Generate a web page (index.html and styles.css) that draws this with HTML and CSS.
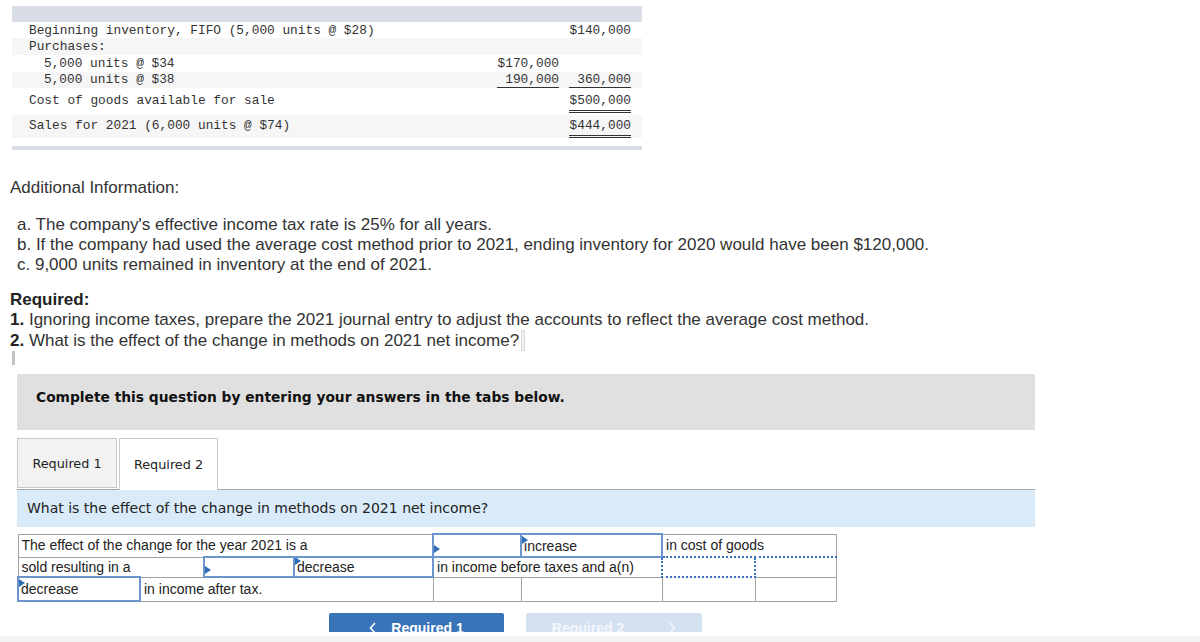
FILE: index.html
```html
<!DOCTYPE html>
<html>
<head>
<meta charset="utf-8">
<link rel="stylesheet" href="styles.css">
</head>
<body>
<div class="viewport">
  <div class="content">
    <div class="inv">
      <div class="inv-bar"></div>
      <div class="inv-row r1"><span class="lbl">Beginning inventory, FIFO (5,000 units @ $28)</span><span class="c1"></span><span class="c2">$140,000</span></div>
      <div class="inv-row r2 alt"><span class="lbl">Purchases:</span><span class="c1"></span><span class="c2"></span></div>
      <div class="inv-row r3"><span class="lbl sub">5,000 units @ $34</span><span class="c1">$170,000</span><span class="c2"></span></div>
      <div class="inv-row r4 alt"><span class="lbl sub">5,000 units @ $38</span><span class="c1 ul">190,000</span><span class="c2 ul">360,000</span></div>
      <div class="inv-row r5"><span class="lbl">Cost of goods available for sale</span><span class="c1"></span><span class="c2 dbl">$500,000</span></div>
      <div class="inv-row r6 alt"><span class="lbl">Sales for 2021 (6,000 units @ $74)</span><span class="c1"></span><span class="c2 dbl">$444,000</span></div>
      <div class="inv-gap"></div>
      <div class="inv-bar thin"></div>
    </div>

    <div class="info">
      <p class="head">Additional Information:</p>
      <p class="ind first">a. The company's effective income tax rate is 25% for all years.</p>
      <p class="ind">b. If the company had used the average cost method prior to 2021, ending inventory for 2020 would have been $120,000.</p>
      <p class="ind">c. 9,000 units remained in inventory at the end of 2021.</p>
      <p class="req"><b>Required:</b></p>
      <p><b>1.</b> Ignoring income taxes, prepare the 2021 journal entry to adjust the accounts to reflect the average cost method.</p>
      <p><b>2.</b> What is the effect of the change in methods on 2021 net income?<span class="caret"></span></p>
      <div class="mark"></div>
    </div>

    <div class="prompt">Complete this question by entering your answers in the tabs below.</div>

    <div class="tabs">
      <div class="tab">Required 1</div>
      <div class="tab active">Required 2</div>
    </div>
    <div class="qbar">What is the effect of the change in methods on 2021 net income?</div>

    <table class="ans">
      <colgroup>
        <col class="ca"><col class="cb"><col class="cc"><col class="cd"><col class="ce"><col class="cf"><col class="cg"><col class="ch">
      </colgroup>
      <tr class="row1">
        <td colspan="4">The effect of the change for the year 2021 is a</td>
        <td class="inp"><div class="box"></div></td>
        <td class="inp"><div class="box">increase</div></td>
        <td colspan="2" class="focus-top">in cost of goods</td>
      </tr>
      <tr class="row2">
        <td colspan="2">sold resulting in a</td>
        <td class="inp"><div class="box"></div></td>
        <td class="inp"><div class="box">decrease</div></td>
        <td colspan="2">in income before taxes and a(n)</td>
        <td class="focus"></td>
        <td></td>
      </tr>
      <tr class="row3">
        <td class="inp"><div class="box">decrease</div></td>
        <td colspan="3">in income after tax.</td>
        <td></td>
        <td></td>
        <td></td>
        <td></td>
      </tr>
    </table>

    <div class="nav">
      <div class="btn prev"><svg class="chev" width="8" height="12" viewBox="0 0 8 12"><polyline points="6,1 1.5,6 6,11" fill="none" stroke="currentColor" stroke-width="1.6"/></svg><span>Required 1</span></div>
      <div class="btn next"><span>Required 2</span><svg class="chev" width="8" height="12" viewBox="0 0 8 12"><polyline points="2,1 6.5,6 2,11" fill="none" stroke="currentColor" stroke-width="1.6"/></svg></div>
    </div>
  </div>
</div>
<div class="footer"></div>
</body>
</html>
```

FILE: styles.css
```css
html, body {
  margin: 0;
  padding: 0;
  background: #ffffff;
}
body {
  font-family: "Liberation Sans", Arial, sans-serif;
  color: #2e2e2e;
  overflow: hidden;
}
.viewport {
  height: 632px;
  overflow: hidden;
}
.content {
  padding-top: 6px;
}

/* inventory table */
.inv {
  margin-left: 12px;
  width: 630px;
  font-family: "Liberation Mono", "DejaVu Sans Mono", monospace;
  font-size: 12.8px;
  color: #333;
}
.inv-bar {
  height: 16px;
  background: #d9dde6;
}
.inv-bar.thin {
  height: 4px;
}
.inv-gap {
  height: 8px;
}
.inv-row {
  display: flex;
  align-items: flex-start;
  line-height: 15px;
  white-space: pre;
}
.inv-row.alt {
  background: #f6f6f6;
}
.inv-row .lbl {
  flex: 1;
  padding-left: 17px;
}
.inv-row .lbl.sub {
  padding-left: 32px;
}
.inv-row .c1,
.inv-row .c2 {
  width: 62px;
  text-align: right;
  flex: none;
}
.inv-row .c1 {
  margin-right: 10px;
}
.inv-row .c2 {
  margin-right: 11px;
}
.r1 { height: 16px; padding-top: 1px; box-sizing: border-box; }
.r2 { height: 17px; padding-top: 1px; box-sizing: border-box; }
.r3 { height: 17px; padding-top: 1px; box-sizing: border-box; }
.r4 { height: 16px; box-sizing: border-box; }
.r4 .ul { border-bottom: 1px solid #333; }
.r5 { height: 27px; padding-top: 5px; box-sizing: border-box; }
.r6 { height: 23px; padding-top: 3px; box-sizing: border-box; }
.dbl {
  padding-bottom: 2px;
  border-bottom: 3px double #333;
}

/* info text */
.info {
  margin-top: 28px;
  font-size: 17px;
  line-height: 20px;
  color: #333;
}
.info p {
  margin: 0;
  padding-left: 10px;
}
.info p.ind {
  padding-left: 17px;
}
.info p.first {
  margin-top: 17px;
}
.info p.req {
  margin-top: 15px;
}
.info b {
  font-weight: bold;
  color: #222;
}
.caret {
  display: inline-block;
  width: 2px;
  height: 19px;
  margin-left: 2px;
  vertical-align: -5px;
  border: 1px solid #d6d6d6;
  background: #f2f2f2;
}
.mark {
  margin-top: 0;
  margin-left: 12px;
  width: 3px;
  height: 14px;
  background: #c2c2c2;
}

/* prompt box */
.prompt {
  margin-top: 9px;
  margin-left: 17px;
  width: 1018px;
  height: 56px;
  box-sizing: border-box;
  padding: 14px 0 0 19px;
  background: #e0e0e0;
  font-family: "DejaVu Sans", Verdana, sans-serif;
  font-weight: bold;
  font-size: 13.8px;
  line-height: 18px;
  color: #111;
}

/* tabs */
.tabs {
  margin-top: 8px;
  margin-left: 17px;
  display: flex;
  gap: 2px;
  height: 51px;
  position: relative;
  z-index: 1;
}
.tab {
  width: 100px;
  height: 50px;
  box-sizing: border-box;
  border: 1px solid #c9c9c9;
  background: #f2f2f2;
  font-family: "DejaVu Sans", Verdana, sans-serif;
  font-size: 12.8px;
  color: #222;
  display: flex;
  align-items: center;
  justify-content: center;
}
.tab.active {
  width: 99px;
  height: 52px;
  background: #ffffff;
  border-bottom: none;
}

.qbar {
  margin-left: 17px;
  width: 1018px;
  height: 38px;
  box-sizing: border-box;
  border-top: 1px solid #a6a6a6;
  background: #d9eaf8;
  padding: 9px 0 0 10px;
  font-family: "DejaVu Sans", Verdana, sans-serif;
  font-size: 14px;
  line-height: 18px;
  color: #222;
}

/* answer table */
.ans {
  margin-top: 6px;
  margin-left: 17px;
  border-collapse: collapse;
  table-layout: fixed;
  width: 818px;
  font-family: "Liberation Sans", Arial, sans-serif;
  font-size: 14px;
  color: #222;
}
.ans col.ca { width: 122px; }
.ans col.cb { width: 64px; }
.ans col.cc { width: 90px; }
.ans col.cd { width: 139px; }
.ans col.ce { width: 88px; }
.ans col.cf { width: 141px; }
.ans col.cg { width: 93px; }
.ans col.ch { width: 81px; }
.ans td {
  border: 1px solid #a3a3a3;
  padding: 0 3px;
  white-space: nowrap;
  overflow: hidden;
  line-height: 16px;
}
.ans tr.row1 td { height: 21px; }
.ans tr.row2 td { height: 18px; }
.ans tr.row3 td { height: 22px; }
.ans td.inp {
  padding: 0;
  border: 2px solid #6b95cc;
}
.ans td.inp .box {
  position: relative;
  padding: 0 2px;
  line-height: 18px;
}
.ans td.inp .box::before {
  content: "";
  position: absolute;
  left: 0;
  top: -1px;
  border-left: 6px solid #2f6db5;
  border-top: 4px solid transparent;
  border-bottom: 4px solid transparent;
}
.ans td.focus-top {
  border-bottom: 2px dotted #3a72c0;
}
.ans td.focus {
  border: 2px dotted #3a72c0;
}

/* nav buttons */
.nav {
  margin-top: 11px;
  margin-left: 329px;
  display: flex;
  gap: 22px;
}
.btn {
  width: 175px;
  height: 30px;
  box-sizing: border-box;
  border-radius: 2px;
  display: flex;
  align-items: center;
  justify-content: center;
  gap: 14px;
  font-family: "Liberation Sans", Arial, sans-serif;
  font-weight: bold;
  font-size: 14px;
}
.btn.prev {
  background: #3a74b8;
  color: #ffffff;
}
.btn.next {
  width: 176px;
  background: #d4e1f1;
  color: #f4f7fb;
  gap: 44px;
}
.chev {
  display: block;
}

.footer {
  margin-top: 4px;
  height: 6px;
  background: #f2f2f2;
}
```
